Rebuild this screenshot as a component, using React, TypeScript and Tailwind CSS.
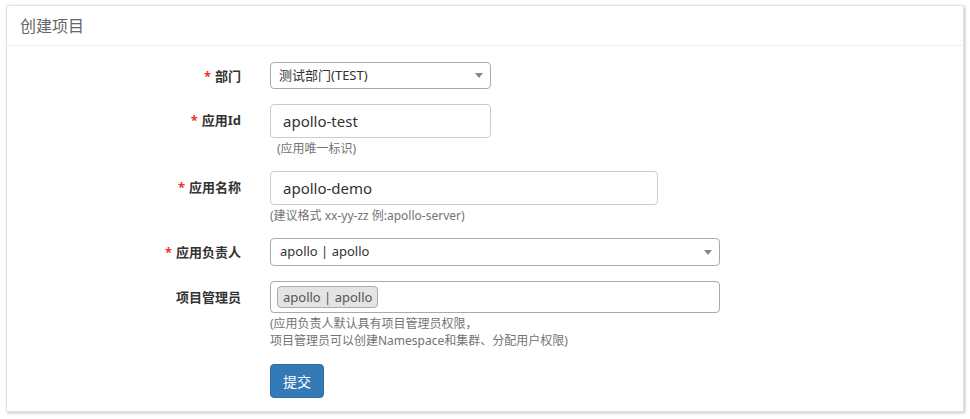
const labelCls =
  "w-[234px] shrink-0 text-right text-[13px] font-bold text-[#333] leading-[20px]";

function Label({ text, required }: { text: string; required?: boolean }) {
  return (
    <div className={labelCls}>
      {required && <span className="mr-[4px] text-[#e33]">*</span>}
      {text}
    </div>
  );
}

function Caret() {
  return (
    <span className="h-0 w-0 border-x-[4px] border-t-[5px] border-x-transparent border-t-[#888]" />
  );
}

export default function App() {
  return (
    <div
      className="h-[419px] w-[970px] bg-white px-[6px] pt-[5px]"
      style={{ fontFamily: '"Noto Sans", "Noto Sans CJK SC", sans-serif' }}
    >
      <div className="h-[407px] rounded-[2px] border border-[#e2e2e2] bg-white shadow-[1px_1px_3px_rgba(0,0,0,0.25)]">
        <div className="flex h-[40px] items-center border-b border-[#eee] px-[13px] text-[16px] text-[#666]">
          创建项目
        </div>

        <div className="pt-[16px]">
          <div className="flex items-center gap-[29px]">
            <Label text="部门" required />
            <div className="flex h-[27px] w-[221px] items-center justify-between rounded-[4px] border border-[#aaa] pl-[8px] pr-[7px] text-[13px] text-[#333]">
              <span>测试部门(TEST)</span>
              <Caret />
            </div>
          </div>

          <div className="mt-[15px] flex items-start gap-[29px]">
            <div className="pt-[6px]">
              <Label text="应用Id" required />
            </div>
            <div>
              <div className="flex h-[34px] w-[221px] items-center rounded-[4px] border border-[#ccc] px-[12px] text-[15px] text-[#333]">
                apollo-test
              </div>
              <div className="mt-[2px] pl-[7px] text-[12px] leading-[17px] text-[#737373]">
                (应用唯一标识)
              </div>
            </div>
          </div>

          <div className="mt-[14px] flex items-start gap-[29px]">
            <div className="pt-[6px]">
              <Label text="应用名称" required />
            </div>
            <div>
              <div className="flex h-[34px] w-[388px] items-center rounded-[4px] border border-[#ccc] px-[12px] text-[15px] text-[#333]">
                apollo-demo
              </div>
              <div className="mt-[2px] text-[12px] leading-[17px] text-[#737373]">
                (建议格式 xx-yy-zz 例:apollo-server)
              </div>
            </div>
          </div>

          <div className="mt-[14px] flex items-center gap-[29px]">
            <Label text="应用负责人" required />
            <div className="flex h-[28px] w-[450px] items-center justify-between rounded-[4px] border border-[#aaa] pl-[9px] pr-[7px] text-[13px] text-[#333]">
              <span>apollo | apollo</span>
              <Caret />
            </div>
          </div>

          <div className="mt-[15px] flex items-start gap-[29px]">
            <div className="pt-[6px]">
              <Label text="项目管理员" />
            </div>
            <div>
              <div className="flex h-[32px] w-[450px] items-center rounded-[4px] border border-[#aaa] px-[6px]">
                <span className="rounded-[4px] border border-[#aaa] bg-[#e4e4e4] px-[5px] text-[13px] leading-[20px] text-[#555]">
                  apollo | apollo
                </span>
              </div>
              <div className="mt-[2px] text-[12px] leading-[17px] text-[#737373]">
                <div>(应用负责人默认具有项目管理员权限，</div>
                <div>项目管理员可以创建Namespace和集群、分配用户权限)</div>
              </div>
            </div>
          </div>

          <div className="mt-[15px] pl-[263px]">
            <button className="h-[34px] w-[54px] rounded-[4px] border border-[#2e6da4] bg-[#337ab7] text-[14px] text-white">
              提交
            </button>
          </div>
        </div>
      </div>
    </div>
  );
}
